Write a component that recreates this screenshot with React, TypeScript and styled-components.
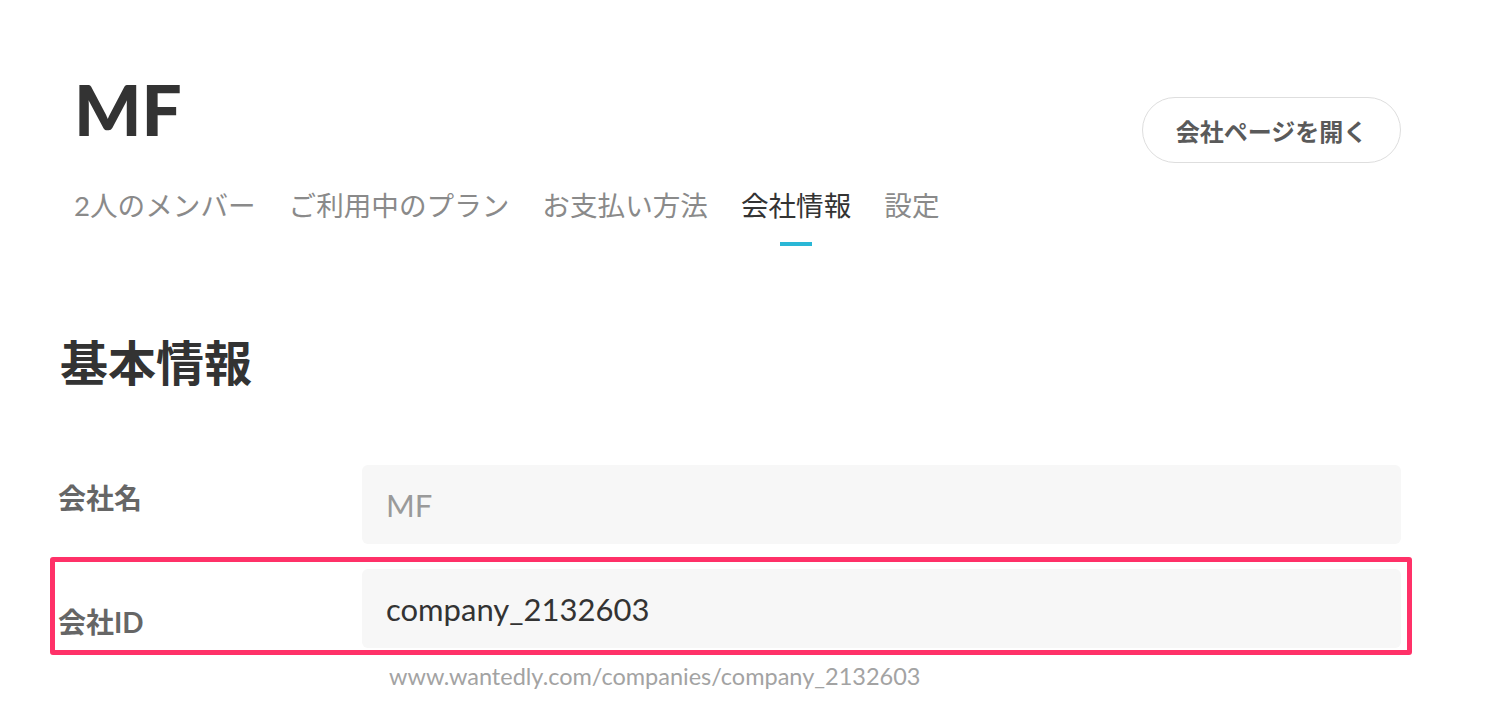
import React from "react";
import styled, { createGlobalStyle } from "styled-components";

const GlobalStyle = createGlobalStyle`
  html, body { margin: 0; padding: 0; background: #ffffff; }
  body {
    font-family: Lato, "Noto Sans CJK JP", sans-serif;
    color: #333333;
    -webkit-font-smoothing: antialiased;
  }
`;

const Page = styled.div`
  width: 1504px;
  height: 722px;
  box-sizing: border-box;
  padding: 73px 103px 0 58px;
  overflow: hidden;
`;

const Header = styled.header`
  padding-left: 16px;
`;

const TitleRow = styled.div`
  display: flex;
  justify-content: space-between;
  align-items: flex-start;
`;

const CompanyName = styled.h1`
  margin: 0;
  font-family: Lato, sans-serif;
  font-size: 71px;
  line-height: 72px;
  font-weight: 900;
  color: #333333;
`;

const OpenButton = styled.button`
  margin-top: 24px;
  width: 259px;
  height: 66px;
  border: 1px solid #dedede;
  border-radius: 33px;
  background: #ffffff;
  font-family: Lato, "Noto Sans CJK JP", sans-serif;
  font-size: 24px;
  font-weight: 700;
  color: #5a5a5a;
  cursor: pointer;
`;

const Tabs = styled.nav`
  display: flex;
  gap: 33px;
  margin-top: 28px;
`;

const Tab = styled.a<{ $active?: boolean }>`
  display: flex;
  flex-direction: column;
  align-items: center;
  gap: 21px;
  font-size: 27.6px;
  line-height: 30px;
  color: ${(p) => (p.$active ? "#333333" : "#8a8a8a")};
  text-decoration: none;
`;

const Indicator = styled.span<{ $active?: boolean }>`
  width: 32px;
  height: 4px;
  background: ${(p) => (p.$active ? "#2ab7d6" : "transparent")};
`;

const SectionTitle = styled.h2`
  margin: 89px 0 0 2px;
  font-size: 48px;
  line-height: 56px;
  font-weight: 700;
  color: #333333;
`;

const Form = styled.div`
  display: flex;
  flex-direction: column;
  gap: 25px;
  margin-top: 74px;
`;

const Row = styled.div`
  position: relative;
  display: grid;
  grid-template-columns: 304px 1fr;
  align-items: center;
`;

const Label = styled.label`
  padding-bottom: 13px;
  font-size: 28px;
  line-height: 32px;
  font-weight: 700;
  color: #666666;
`;

const Field = styled.div`
  display: flex;
  flex-direction: column;
`;

const Input = styled.div<{ $muted?: boolean }>`
  height: 79px;
  box-sizing: border-box;
  display: flex;
  align-items: center;
  padding-left: 24px;
  background: #f7f7f7;
  border-radius: 6px;
  font-family: Lato, sans-serif;
  font-size: 31px;
  color: ${(p) => (p.$muted ? "#9a9a9a" : "#333333")};
`;

const Helper = styled.div`
  margin-top: 16px;
  padding-left: 27px;
  font-family: Lato, sans-serif;
  font-size: 23.5px;
  line-height: 24px;
  color: #a3a3a3;
`;

const Highlight = styled.div`
  position: absolute;
  left: -8px;
  right: -11px;
  top: -12px;
  height: 98px;
  box-sizing: border-box;
  border: 5px solid #ff3168;
  border-radius: 3px;
  pointer-events: none;
`;

const tabs = [
  { label: "2人のメンバー" },
  { label: "ご利用中のプラン" },
  { label: "お支払い方法" },
  { label: "会社情報", active: true },
  { label: "設定" },
];

export default function App() {
  return (
    <>
      <GlobalStyle />
      <Page>
        <Header>
          <TitleRow>
            <CompanyName>MF</CompanyName>
            <OpenButton>会社ページを開く</OpenButton>
          </TitleRow>
          <Tabs>
            {tabs.map((t) => (
              <Tab key={t.label} $active={t.active}>
                {t.label}
                <Indicator $active={t.active} />
              </Tab>
            ))}
          </Tabs>
        </Header>
        <SectionTitle>基本情報</SectionTitle>
        <Form>
          <Row>
            <Label>会社名</Label>
            <Field>
              <Input $muted>MF</Input>
            </Field>
          </Row>
          <Row>
            <Label>会社ID</Label>
            <Field>
              <Input>company_2132603</Input>
              <Helper>www.wantedly.com/companies/company_2132603</Helper>
            </Field>
            <Highlight />
          </Row>
        </Form>
      </Page>
    </>
  );
}
